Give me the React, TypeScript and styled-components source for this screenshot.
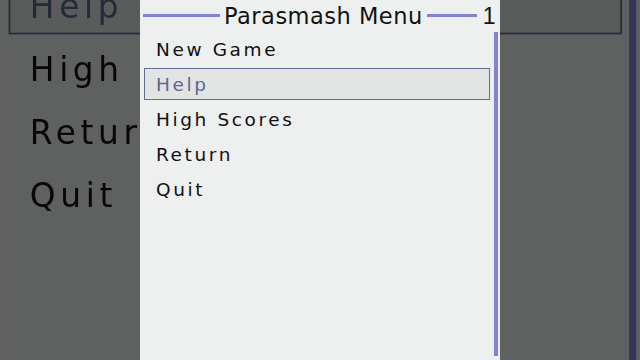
import React from "react";
import styled, { createGlobalStyle } from "styled-components";

const Global = createGlobalStyle`
  html, body { margin: 0; padding: 0; background: #5f605f; }
  body { width: 640px; height: 360px; overflow: hidden; font-family: "DejaVu Sans", Verdana, sans-serif; }
`;

const Stage = styled.div`
  display: grid;
  width: 640px;
  height: 360px;
  overflow: hidden;
  background: #5f605f;
`;

const Backdrop = styled.div`
  grid-area: 1 / 1;
  align-self: start;
  justify-self: start;
  transform-origin: 0 0;
  transform: translate(1.5px, -145.6px) scale(1.773, 1.8);
  filter: brightness(0.4);
`;

const Front = styled.div`
  grid-area: 1 / 1;
  align-self: start;
  justify-self: center;
  position: relative;
  z-index: 1;
`;

const Panel = styled.div`
  width: 360px;
  height: 360px;
  background: #edf0ef;
  display: flex;
  flex-direction: column;
  font-family: "DejaVu Sans", Verdana, sans-serif;
  color: #111;
`;

const TitleRow = styled.div`
  height: 32px;
  flex: none;
  display: flex;
  align-items: center;
  gap: 4px;
  padding-left: 3px;
`;

const Rule = styled.span<{ $w: number }>`
  flex: none;
  width: ${(p) => p.$w}px;
  height: 3px;
  margin-top: -1px;
  background: #8282d6;
`;

const TitleText = styled.span`
  font-size: 22.5px;
  line-height: 32px;
  letter-spacing: 0.5px;
  white-space: nowrap;
`;

const Counter = styled.span`
  font-family: "Liberation Sans", Arial, sans-serif;
  font-size: 23px;
  line-height: 32px;
  margin-left: 2px;
`;

const Body = styled.div`
  flex: 1;
  display: flex;
  gap: 4px;
  padding: 0 2px 4px 4px;
  min-height: 0;
`;

const List = styled.ul`
  flex: 1;
  margin: 0;
  padding: 1px 0 0;
  list-style: none;
  display: flex;
  flex-direction: column;
`;

const Item = styled.li`
  height: 35px;
  flex: none;
`;

const Label = styled.div<{ $sel?: boolean }>`
  box-sizing: border-box;
  height: 32px;
  padding: 1px 0 0 11px;
  border: 1px solid ${(p) => (p.$sel ? "#5f6f95" : "transparent")};
  background: ${(p) => (p.$sel ? "#e2e4e3" : "transparent")};
  color: ${(p) => (p.$sel ? "#586a92" : "#111")};
  font-size: 18.5px;
  line-height: 29px;
  letter-spacing: 2.6px;
  white-space: nowrap;
`;

const Track = styled.div`
  width: 4px;
  flex: none;
  background: #8282d6;
`;

const items = ["New Game", "Help", "High Scores", "Return", "Quit"];

function MenuPanel() {
  return (
    <Panel>
      <TitleRow>
        <Rule $w={77} />
        <TitleText>Parasmash Menu</TitleText>
        <Rule $w={50} />
        <Counter>1</Counter>
      </TitleRow>
      <Body>
        <List>
          {items.map((t) => (
            <Item key={t}>
              <Label $sel={t === "Help"}>{t}</Label>
            </Item>
          ))}
        </List>
        <Track />
      </Body>
    </Panel>
  );
}

export default function App() {
  return (
    <>
      <Global />
      <Stage>
        <Backdrop aria-hidden>
          <MenuPanel />
        </Backdrop>
        <Front>
          <MenuPanel />
        </Front>
      </Stage>
    </>
  );
}
